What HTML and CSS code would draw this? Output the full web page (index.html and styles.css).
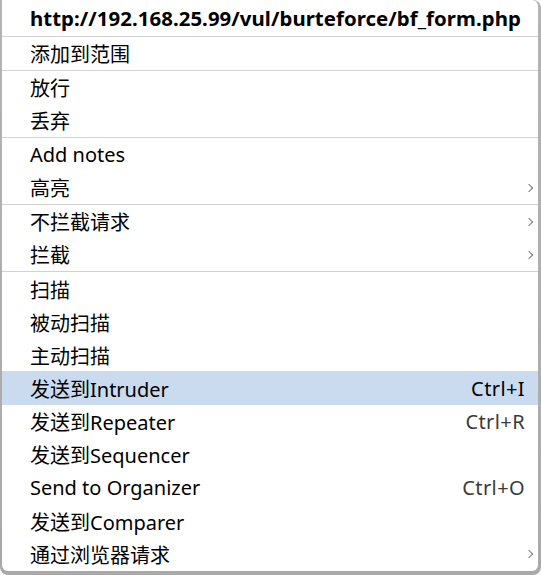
FILE: index.html
```html
<!DOCTYPE html>
<html lang="zh-CN">
<head>
<meta charset="utf-8">
<title>Context menu</title>
<link rel="stylesheet" href="styles.css">
</head>
<body>
<div class="frame">
  <div class="menu">
    <div class="title">http://192.168.25.99/vul/burteforce/bf_form.php</div>
    <div class="group">
      <div class="item"><span class="label">添加到范围</span></div>
    </div>
    <div class="group">
      <div class="item"><span class="label">放行</span></div>
      <div class="item"><span class="label">丢弃</span></div>
    </div>
    <div class="group">
      <div class="item"><span class="label">Add notes</span></div>
      <div class="item"><span class="label">高亮</span><span class="arrow"></span></div>
    </div>
    <div class="group">
      <div class="item"><span class="label">不拦截请求</span><span class="arrow"></span></div>
      <div class="item"><span class="label">拦截</span><span class="arrow"></span></div>
    </div>
    <div class="group last">
      <div class="item"><span class="label">扫描</span></div>
      <div class="item"><span class="label">被动扫描</span></div>
      <div class="item"><span class="label">主动扫描</span></div>
      <div class="item active"><span class="label">发送到Intruder</span><span class="shortcut">Ctrl+I</span></div>
      <div class="item"><span class="label">发送到Repeater</span><span class="shortcut">Ctrl+R</span></div>
      <div class="item"><span class="label">发送到Sequencer</span></div>
      <div class="item"><span class="label">Send to Organizer</span><span class="shortcut">Ctrl+O</span></div>
      <div class="item"><span class="label">发送到Comparer</span></div>
      <div class="item"><span class="label">通过浏览器请求</span><span class="arrow"></span></div>
    </div>
  </div>
</div>
</body>
</html>
```
FILE: styles.css
```css
html, body {
  margin: 0;
  padding: 0;
  background: #ffffff;
}
body {
  width: 541px;
  height: 575px;
  overflow: hidden;
  font-family: "Noto Sans", "Noto Sans CJK SC", sans-serif;
  color: #000;
}
.frame {
  width: 541px;
  height: 575px;
  box-sizing: border-box;
  padding: 0 3px 4px 2px;
  background: linear-gradient(#b4b4b4, #a9a9a9);
  border-radius: 0 8px 8px 8px;
}
.menu {
  background: #fff;
  height: 100%;
  border-radius: 0 6px 6px 6px;
  overflow: hidden;
}
.title {
  height: 37px;
  box-sizing: border-box;
  padding-left: 28px;
  display: flex;
  align-items: center;
  font-weight: bold;
  font-size: 20.4px;
  letter-spacing: 0.05px;
  border-bottom: 1px solid #d2d2d2;
  white-space: nowrap;
}
.group {
  border-bottom: 1px solid #d2d2d2;
}
.group.last {
  border-bottom: none;
}
.item {
  height: 33px;
  display: flex;
  align-items: center;
  padding-left: 28px;
  padding-right: 13px;
  font-size: 20px;
  position: relative;
}
.group.last .item {
  height: 33.15px;
  padding-top: 1px;
  box-sizing: border-box;
}
.item.active {
  background: #cadbf0;
}
.label {
  flex: 1;
  white-space: nowrap;
}
.shortcut {
  color: #3a3a3a;
  letter-spacing: 0.4px;
}
.item.active .shortcut {
  color: #000;
}
.arrow {
  position: absolute;
  right: 6px;
  top: 50%;
  width: 5px;
  height: 5px;
  margin-top: -3px;
  border-top: 1px solid #7a7a7a;
  border-right: 1px solid #7a7a7a;
  transform: rotate(45deg);
}
```
